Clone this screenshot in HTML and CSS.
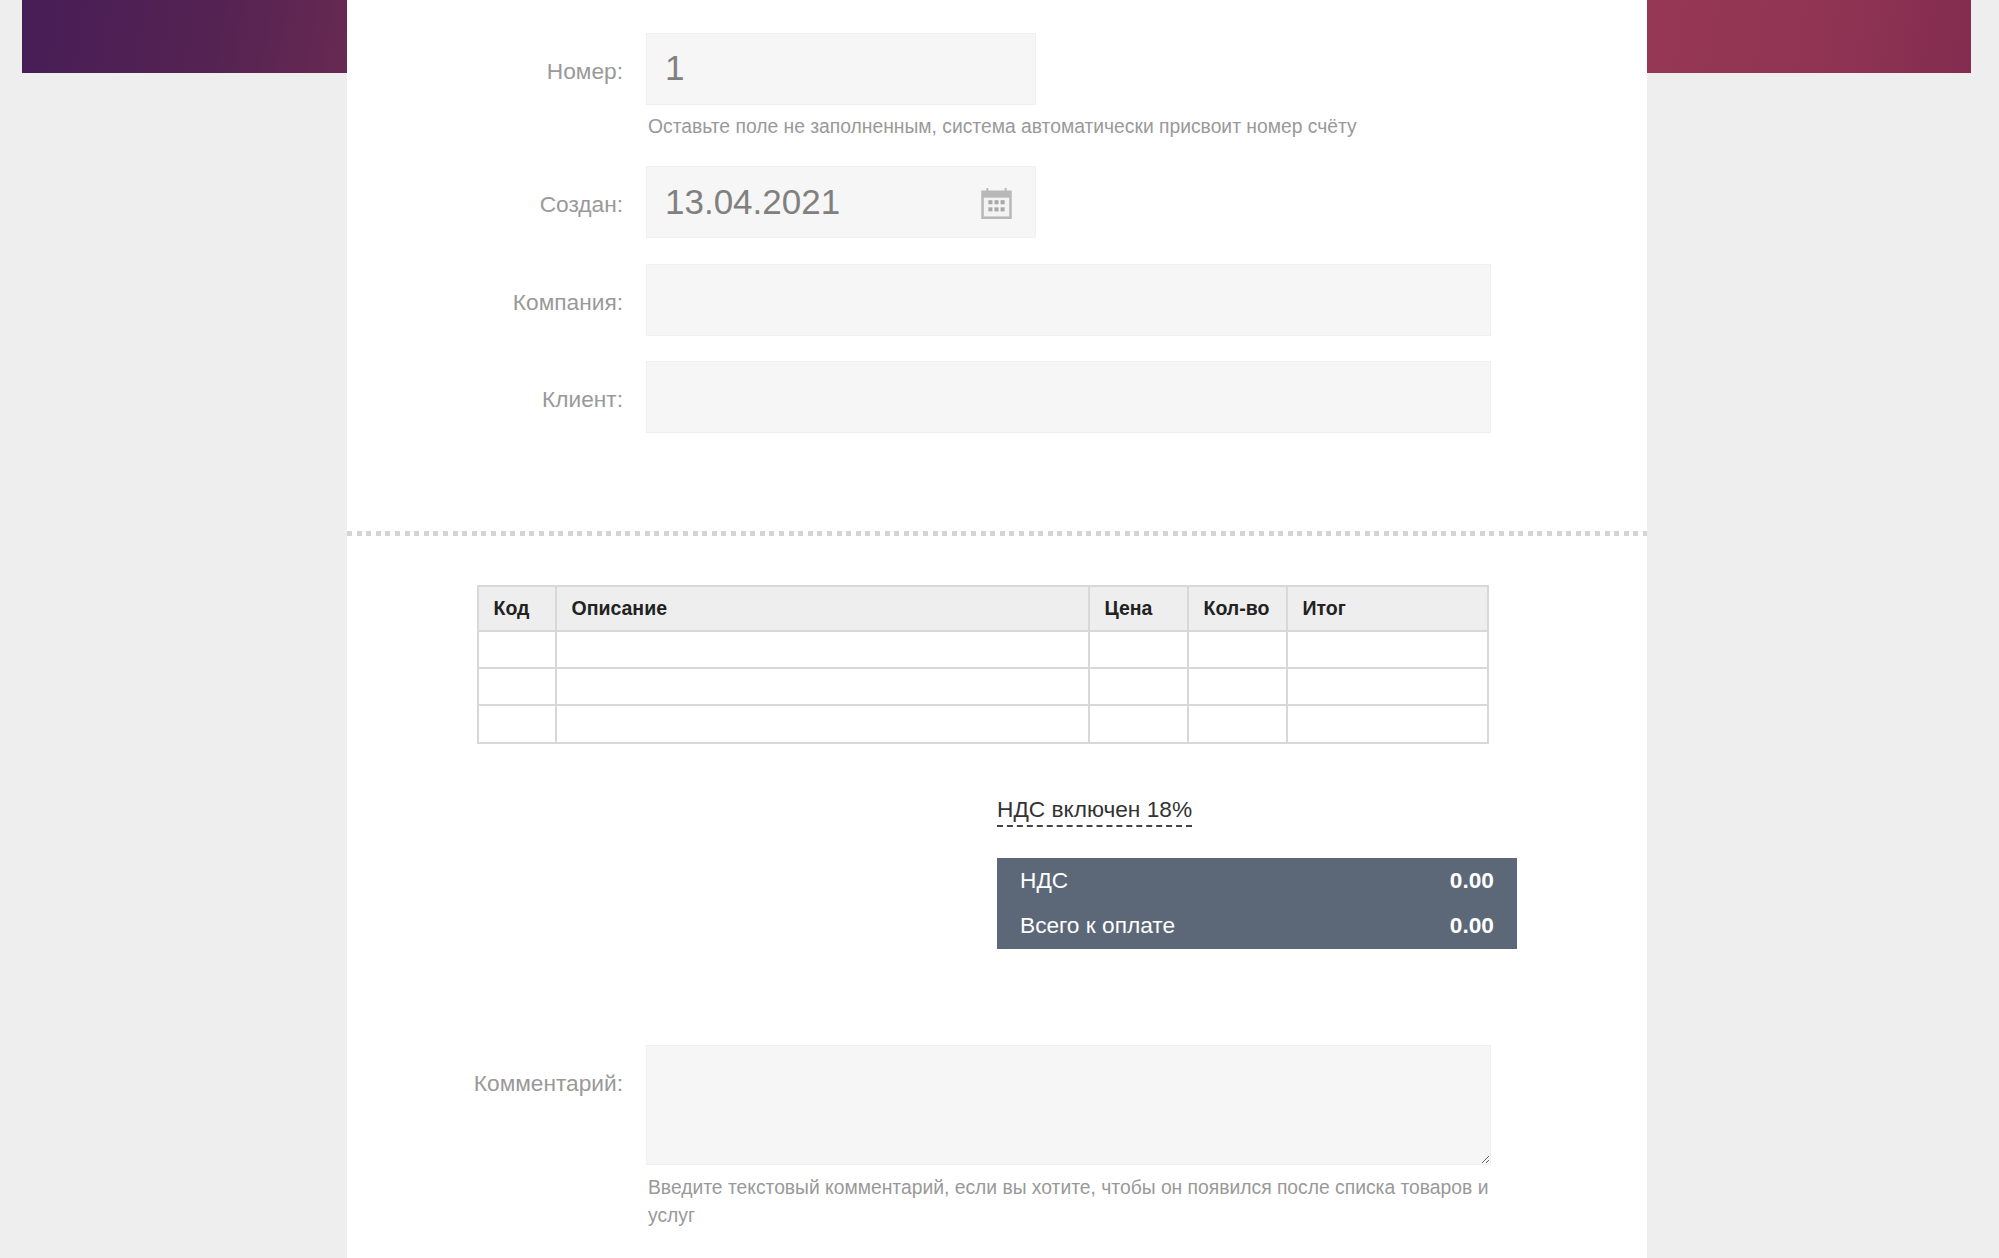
FILE: index.html
```html
<!DOCTYPE html>
<html lang="ru">
<head>
<meta charset="utf-8">
<title>Счёт</title>
<link rel="stylesheet" href="styles.css">
</head>
<body>
<div class="page">
  <div class="side side-left"><div class="band band-left"></div></div>
  <main class="sheet">
    <section class="form-top">
      <div class="row">
        <label class="label">Номер:</label>
        <div class="field">
          <div class="input input-short">1</div>
          <p class="hint hint-first">Оставьте поле не заполненным, система автоматически присвоит номер счёту</p>
        </div>
      </div>
      <div class="row row-date">
        <label class="label">Создан:</label>
        <div class="field">
          <div class="input input-short input-date">
            <span>13.04.2021</span>
            <svg class="cal" viewBox="1 1.500 30 30.500" width="31" height="31" aria-hidden="true">
              <path fill="#b8b8b8" d="M1 4h5V1.500h2V4h16V1.500h2V4h5v28H1z"/>
              <rect x="3.500" y="11" width="25" height="18.500" fill="#f3f3f3"/>
              <g fill="#a8a8a8">
                <rect x="8" y="13.500" width="4" height="4"/><rect x="14" y="13.500" width="4" height="4"/><rect x="20" y="13.500" width="4" height="4"/>
                <rect x="8" y="20.500" width="4" height="4"/><rect x="14" y="20.500" width="4" height="4"/><rect x="20" y="20.500" width="4" height="4"/>
              </g>
            </svg>
          </div>
        </div>
      </div>
      <div class="row">
        <label class="label">Компания:</label>
        <div class="field"><div class="input"></div></div>
      </div>
      <div class="row">
        <label class="label">Клиент:</label>
        <div class="field"><div class="input"></div></div>
      </div>
    </section>
    <hr class="divider">
    <section class="items">
      <table class="table">
        <thead>
          <tr><th class="c1">Код</th><th class="c2">Описание</th><th class="c3">Цена</th><th class="c4">Кол-во</th><th class="c5">Итог</th></tr>
        </thead>
        <tbody>
          <tr><td></td><td></td><td></td><td></td><td></td></tr>
          <tr><td></td><td></td><td></td><td></td><td></td></tr>
          <tr class="row-last"><td></td><td></td><td></td><td></td><td></td></tr>
        </tbody>
      </table>
      <div class="totals">
        <a class="vat-link">НДС включен 18%</a>
        <div class="summary">
          <div class="summary-row"><span>НДС</span><strong>0.00</strong></div>
          <div class="summary-row"><span>Всего к оплате</span><strong>0.00</strong></div>
        </div>
      </div>
    </section>
    <section class="form-bottom">
      <div class="row">
        <label class="label label-area">Комментарий:</label>
        <div class="field">
          <textarea class="area"></textarea>
          <p class="hint hint-area">Введите текстовый комментарий, если вы хотите, чтобы он появился после списка товаров и услуг</p>
        </div>
      </div>
    </section>
  </main>
  <div class="side side-right"><div class="band band-right"></div></div>
</div>
</body>
</html>
```
FILE: styles.css
```css
* { box-sizing: border-box; }
html, body { margin: 0; height: 100%; overflow: hidden; }
body {
  background: #eeeeee;
  font-family: "Liberation Sans", Arial, sans-serif;
  color: #333;
}
.page { display: flex; height: 1258px; }
.side-left { width: 347px; padding-left: 22px; }
.side-right { width: 352px; padding-right: 28px; }
.band { height: 73px; }
.band-left { background: linear-gradient(100deg, #471d57 0%, #552352 60%, #672952 100%); }
.band-right { background: linear-gradient(100deg, #963755 0%, #903453 55%, #832c4f 100%); }
.sheet { width: 1300px; background: #fff; padding-top: 33px; }

.form-top { padding-bottom: 98px; }
.row { display: flex; gap: 23px; margin-bottom: 25px; }
.row-date { margin-bottom: 26px; }
.form-top .row:last-child { margin-bottom: 0; }
.label {
  width: 276px;
  height: 72px;
  line-height: 77px;
  text-align: right;
  font-size: 22.700px;
  color: #999;
}
.field { width: 845px; }
.input {
  height: 72px;
  background: #f6f6f6;
  border: 1px solid #f0f0f0;
  padding-left: 18px;
  font-size: 35px;
  line-height: 68px;
  color: #808080;
}
.input-short { width: 390px; }
.input-date { display: flex; justify-content: space-between; align-items: center; padding-right: 23px; }
.cal { display: block; margin-top: 2px; }
.hint {
  margin: 8px 0 0;
  padding-left: 2px;
  font-size: 19.300px;
  line-height: 28px;
  color: #999;
}
.hint-first { margin-bottom: -8px; padding-bottom: 8px; height: 36px; }

.divider {
  margin: 0;
  height: 5px;
  border: 0;
  background: repeating-linear-gradient(90deg, #d4d4d4 0, #d4d4d4 5px, transparent 5px, transparent 9.600px);
}

.items { padding: 49px 0 0 130px; }
.table {
  width: 1012px;
  table-layout: fixed;
  border-collapse: collapse;
  border: 2px solid #d8d8d8;
}
.table th, .table td { border: 2px solid #d8d8d8; padding: 0 0 0 14.500px; }
.table th {
  height: 45px;
  background: #eeeeee;
  text-align: left;
  font-size: 19.500px;
  font-weight: 700;
  color: #222;
}
.table td { height: 37px; }
.table .row-last td { height: 38px; }
.c1 { width: 78px; }
.c2 { width: 533px; }
.c3 { width: 99px; }
.c4 { width: 99px; }

.totals { padding: 51px 0 0 520px; }
.vat-link {
  display: inline-block;
  font-size: 22.700px;
  line-height: 28px;
  padding-bottom: 2px;
  color: #333;
  border-bottom: 2px dashed #444;
}
.summary {
  margin-top: 31px;
  width: 520px;
  height: 91px;
  background: #5c6878;
  color: #fff;
  padding: 0 23px;
  font-size: 22.700px;
}
.summary-row { display: flex; justify-content: space-between; line-height: 45px; }

.form-bottom { padding-top: 96px; }
.label-area { line-height: 77px; }
.area {
  display: block;
  width: 845px;
  height: 120px;
  background: #f6f6f6;
  border: 1px solid #f0f0f0;
  outline: 0;
  resize: both;
  margin: 0;
}
.hint-area { margin-top: 9px; }
```
